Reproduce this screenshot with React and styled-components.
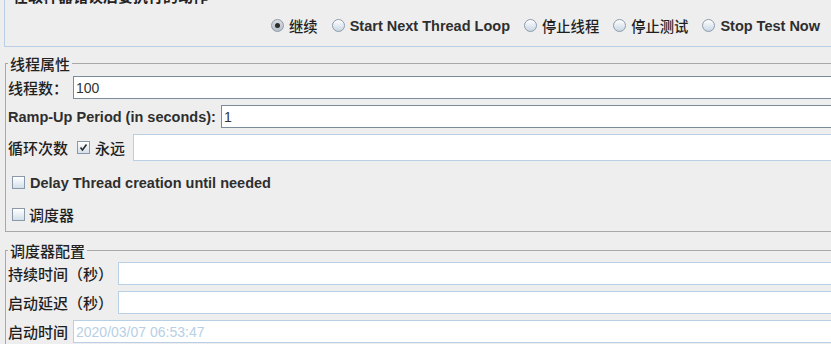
import React from 'react'
import styled, { createGlobalStyle } from 'styled-components'

const GlobalStyle = createGlobalStyle`
  html, body {
    margin: 0;
    padding: 0;
    background: #eeeeee;
    overflow: hidden;
  }
  body {
    font-family: "Liberation Sans", "Noto Sans CJK SC", sans-serif;
    color: #333333;
  }
`

const Page = styled.div`
  width: 831px;
  height: 344px;
  overflow: hidden;
  background: #eeeeee;
`

const Group = styled.fieldset`
  margin: ${p => p.$top || 0}px -12px 0 ${p => p.$left || 5}px;
  padding: ${p => p.$pt || 0}px 0 ${p => p.$pb || 0}px ${p => p.$pl || 2}px;
  border: 1px solid ${p => (p.$blue ? '#b8cfe5' : '#a8a8a8')};
  min-width: 0;
`

const Legend = styled.legend`
  padding: 0 2px;
  font-family: "Noto Sans CJK SC", sans-serif;
  font-size: 15px;
  line-height: 17px;
  font-weight: ${p => (p.$bold ? 700 : 500)};
  color: #222222;
  white-space: nowrap;
`

const RadioRow = styled.div`
  display: flex;
  justify-content: flex-end;
  align-items: center;
  gap: 14px;
  height: 17px;
  padding-right: 22px;
`

const Option = styled.label`
  display: flex;
  align-items: center;
  gap: ${p => p.$gap || 5}px;
`

const RadioDot = styled.span`
  width: 13px;
  height: 13px;
  box-sizing: border-box;
  border-radius: 50%;
  border: 1px solid #8d9baa;
  background: ${p =>
    p.$on
      ? 'linear-gradient(#d9dde2, #b7bec6)'
      : 'linear-gradient(#ffffff, #c8d6e4)'};
  display: flex;
  align-items: center;
  justify-content: center;
  &::after {
    content: '';
    display: ${p => (p.$on ? 'block' : 'none')};
    width: 5px;
    height: 5px;
    border-radius: 50%;
    background: #2b2b2b;
  }
`

const Box = styled.span`
  width: 13px;
  height: 13px;
  box-sizing: border-box;
  border: 1px solid #8a99a8;
  background: linear-gradient(#ffffff, #d3dfea);
  display: flex;
  align-items: center;
  justify-content: center;
`

const En = styled.span`
  font-family: "Liberation Sans", sans-serif;
  font-size: 14.5px;
  font-weight: bold;
  color: #2e2e2e;
  white-space: nowrap;
`

const Zh = styled.span`
  font-family: "Noto Sans CJK SC", sans-serif;
  font-size: ${p => p.$size || 15}px;
  font-weight: 500;
  color: #1f1f1f;
  white-space: nowrap;
`

const Row = styled.div`
  display: flex;
  align-items: center;
  height: ${p => p.$h || 23}px;
  margin-top: ${p => p.$mt ?? 6}px;
  padding-left: ${p => p.$pl || 0}px;
`

const Label = styled.div`
  width: ${p => p.$w}px;
  flex: none;
  display: flex;
  align-items: center;
  gap: ${p => p.$gap || 5}px;
`

const Field = styled.div`
  flex: 1;
  align-self: stretch;
  box-sizing: border-box;
  background: #ffffff;
  border: 1px solid ${p => (p.$dark ? '#7c8b99' : '#b8cfe5')};
  padding-left: 2px;
  display: flex;
  align-items: center;
  font-family: "Liberation Sans", sans-serif;
  font-size: 14px;
  color: ${p => (p.$disabled ? '#b8cfe5' : '#333333')};
`

const Radio = ({ on, children }) => (
  <Option>
    <RadioDot $on={on} />
    {children}
  </Option>
)

const Check = ({ on, gap, children }) => (
  <Option $gap={gap}>
    <Box>
      {on && (
        <svg width="9" height="9" viewBox="0 0 9 9">
          <path d="M1.5 4.5 L3.5 7 L7.5 1.5" stroke="#2b2b2b" strokeWidth="1.6" fill="none" />
        </svg>
      )}
    </Box>
    {children}
  </Option>
)

export default function App() {
  return (
    <Page>
      <GlobalStyle />
      <Group $blue $top={-13} $left={4} $pl={6} $pt={13} $pb={12}>
        <Legend $bold>在取样器错误后要执行的动作</Legend>
        <RadioRow>
          <Radio on><Zh $size={14.3}>继续</Zh></Radio>
          <Radio><En>Start Next Thread Loop</En></Radio>
          <Radio><Zh $size={14.3}>停止线程</Zh></Radio>
          <Radio><Zh $size={14.3}>停止测试</Zh></Radio>
          <Radio><En>Stop Test Now</En></Radio>
        </RadioRow>
      </Group>

      <Group $top={8} $pb={8}>
        <Legend>线程属性</Legend>
        <Row $mt={4}>
          <Label $w={65}><Zh>线程数：</Zh></Label>
          <Field $dark>100</Field>
        </Row>
        <Row>
          <Label $w={213}><En>Ramp-Up Period (in seconds):</En></Label>
          <Field $dark>1</Field>
        </Row>
        <Row $h={27}>
          <Label $w={125} $gap={9}>
            <Zh>循环次数</Zh>
            <Check on><Zh>永远</Zh></Check>
          </Label>
          <Field />
        </Row>
        <Row $h={17} $mt={13} $pl={4}>
          <Check><En>Delay Thread creation until needed</En></Check>
        </Row>
        <Row $h={17} $mt={15} $pl={4}>
          <Check gap={4}><Zh>调度器</Zh></Check>
        </Row>
      </Group>

      <Group $top={10} $pb={7}>
        <Legend>调度器配置</Legend>
        <Row $mt={3}>
          <Label $w={110}><Zh>持续时间（秒）</Zh></Label>
          <Field />
        </Row>
        <Row>
          <Label $w={110}><Zh>启动延迟（秒）</Zh></Label>
          <Field />
        </Row>
        <Row>
          <Label $w={65}><Zh>启动时间</Zh></Label>
          <Field $disabled>2020/03/07 06:53:47</Field>
        </Row>
      </Group>
    </Page>
  )
}
